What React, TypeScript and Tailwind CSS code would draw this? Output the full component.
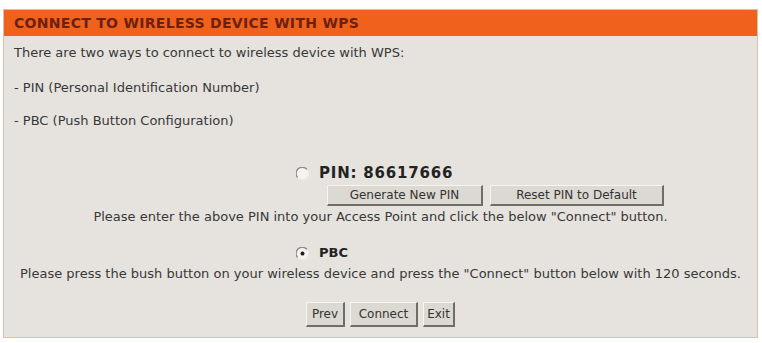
const Radio = ({ checked }: { checked?: boolean }) => (
  <svg width="13" height="13" viewBox="0 0 13 13" className="shrink-0">
    <circle cx="6.5" cy="6.5" r="6" fill="#f4f3f0" />
    <path d="M11 2.5 A6 6 0 0 0 1.5 10.5" fill="none" stroke="#8a8a86" strokeWidth="1.3" />
    <path d="M2.5 11 A6 6 0 0 0 11 2.5" fill="none" stroke="#ecebe7" strokeWidth="1.2" />
    {checked && <circle cx="6.5" cy="6.5" r="2" fill="#222" />}
  </svg>
);

const Btn = ({ label, className }: { label: string; className: string }) => (
  <button
    className={
      "bg-[#dcd9d2] border-t border-l border-t-[#f6f5f2] border-l-[#f6f5f2] border-b-2 border-r-2 border-b-[#6f6d68] border-r-[#6f6d68] text-[12px] text-[#333] flex items-center justify-center " +
      className
    }
  >
    {label}
  </button>
);

export default function App() {
  return (
    <div
      className="w-[762px] h-[343px] bg-white pt-[9px] px-[3px]"
      style={{ fontFamily: "'DejaVu Sans', Tahoma, sans-serif" }}
    >
      <div className="border border-[#dcbfa8] bg-[#e6e3df] h-[329px] w-[755px]">
        <div className="h-[26px] bg-[#f0621c] flex items-center pl-[10px] text-[14px] font-bold tracking-[0.3px] text-[#6e200e]">
          CONNECT TO WIRELESS DEVICE WITH WPS
        </div>
        <div className="text-[13px] leading-[16px] text-[#383838]">
          <p className="mt-[9px] pl-[10px]">There are two ways to connect to wireless device with WPS:</p>
          <p className="mt-[19px] pl-[10px]">- PIN (Personal Identification Number)</p>
          <p className="mt-[17px] pl-[10px]">- PBC (Push Button Configuration)</p>

          <div className="mt-[36px] flex items-center pl-[292px] gap-[10px]">
            <Radio />
            <span className="font-bold text-[15px] tracking-[0.8px] text-[#222]">PIN: 86617666</span>
          </div>
          <div className="mt-[4px] flex pl-[323px] gap-[7px]">
            <Btn label="Generate New PIN" className="w-[156px] h-[21px]" />
            <Btn label="Reset PIN to Default" className="w-[174px] h-[21px]" />
          </div>
          <p className="mt-[3px] text-center">
            Please enter the above PIN into your Access Point and click the below "Connect" button.
          </p>

          <div className="mt-[20px] flex items-center pl-[292px] gap-[10px]">
            <Radio checked />
            <span className="font-bold text-[13px] text-[#222]">PBC</span>
          </div>
          <p className="mt-[5px] text-center">
            Please press the bush button on your wireless device and press the "Connect" button below with 120 seconds.
          </p>

          <div className="mt-[20px] flex justify-center gap-[5px]">
            <Btn label="Prev" className="w-[39px] h-[25px]" />
            <Btn label="Connect" className="w-[68px] h-[25px]" />
            <Btn label="Exit" className="w-[32px] h-[25px]" />
          </div>
        </div>
      </div>
    </div>
  );
}
